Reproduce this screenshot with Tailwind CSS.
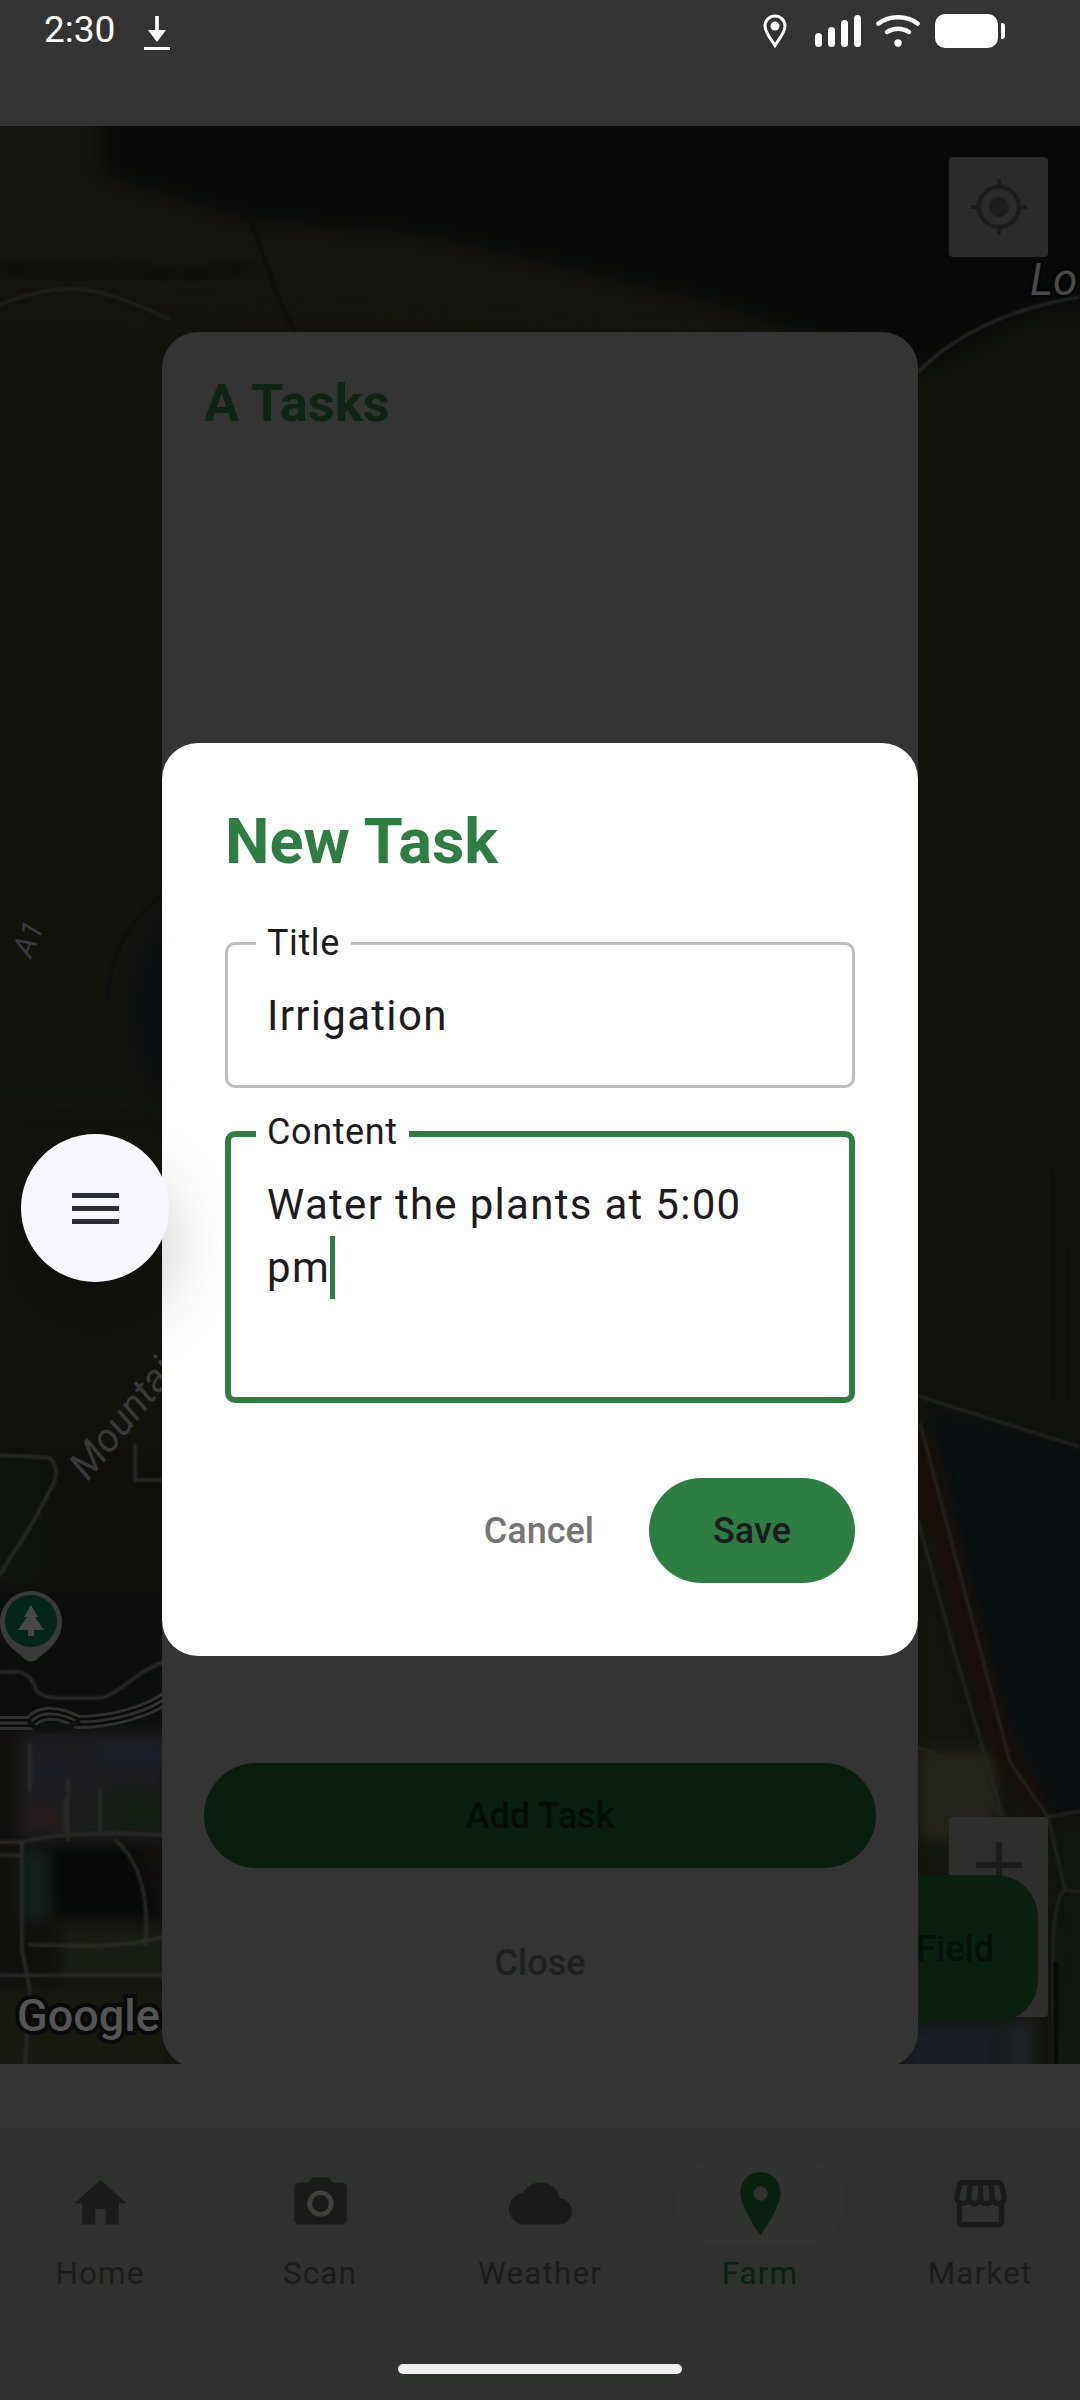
<!DOCTYPE html>
<html lang="en">
<head>
    <meta charset="UTF-8">
    <meta name="viewport" content="width=device-width, initial-scale=1.0">
    <title>Farm - New Task</title>
    <script src="https://cdn.jsdelivr.net/npm/@tailwindcss/browser@4"></script>
</head>
<body class="bg-[#333333]">
<div class="relative w-[1080px] h-[2400px] overflow-hidden bg-[#343434] font-[family-name:Roboto]">

    <!-- status bar + app header -->
    <div class="h-[126px] bg-[#333333] flex items-start justify-between pl-[44px] pr-[75px] pt-[9px] text-white">
        <div class="flex items-center gap-[29px]">
            <span class="text-[37px] leading-[42px]">2:30</span>
            <svg class="w-[26px] h-[34px] mt-[6px]" viewBox="0 0 26 34" fill="#fff">
                <path d="M11.200 0h3.600v14H22L13 26 4 14h7.200z"/>
                <rect x="0" y="31" width="26" height="3"/>
            </svg>
        </div>
        <div class="flex items-center mt-[5px]">
            <svg class="w-[24px] h-[34px]" viewBox="0 0 24 34" fill="none">
                <path d="M12 31.500C8 25 2 18.500 2 12a10 10 0 0 1 20 0c0 6.500-6 13-10 19.500z" stroke="#fff" stroke-width="3"/>
                <circle cx="12" cy="12" r="4.500" fill="#fff"/>
            </svg>
            <svg class="w-[46px] h-[34px] ml-[28px]" viewBox="0 0 46 34" fill="#fff">
                <rect x="0" y="19" width="7" height="14" rx="3.500"/>
                <rect x="13" y="13" width="7" height="20" rx="3.500"/>
                <rect x="26" y="6" width="7" height="27" rx="3.500"/>
                <rect x="39" y="1" width="7" height="32" rx="3.500"/>
            </svg>
            <svg class="w-[44px] h-[34px] ml-[15px]" viewBox="0 0 44 34" fill="none" stroke="#fff" stroke-linecap="round">
                <path d="M2.500 9.500C13 1 31 1 41.500 9.500" stroke-width="4.500"/>
                <path d="M11 18c6.500-4.500 15.500-4.500 22 0" stroke-width="4.500"/>
                <circle cx="22" cy="29" r="3.700" fill="#fff" stroke="none"/>
            </svg>
            <div class="w-[63px] h-[34px] ml-[15px] bg-white rounded-[10px]"></div>
            <div class="w-[4px] h-[16px] ml-[3px] bg-white rounded-r-[3px]"></div>
        </div>
    </div>

    <!-- map -->
    <div class="relative h-[1938px] overflow-hidden bg-[#12130c]">
        <svg class="absolute inset-0 w-[1080px] h-[1938px]" viewBox="0 126 1080 1938" fill="none">
            <defs>
                <filter id="soft" x="-20%" y="-20%" width="140%" height="140%" color-interpolation-filters="sRGB"><feGaussianBlur stdDeviation="12"/></filter>
                <filter id="mid" x="-20%" y="-20%" width="140%" height="140%" color-interpolation-filters="sRGB"><feGaussianBlur stdDeviation="7"/></filter>
                <filter id="thin" x="-20%" y="-20%" width="140%" height="140%" color-interpolation-filters="sRGB"><feGaussianBlur stdDeviation="1"/></filter>
            </defs>
            <g filter="url(#soft)">
                <rect x="-40" y="300" width="210" height="800" fill="#11140d"/>
                <polygon points="-40,100 300,100 900,350 -40,300" fill="#15130d"/>
                <polygon points="103,90 1120,90 1120,310 1040,310 918,372 800,332 700,300 430,236 250,220 103,176" fill="#070a09"/>
                <ellipse cx="200" cy="1010" rx="70" ry="110" fill="#0b0e10"/>
            </g>
            <path d="M0 265C60 278 110 266 150 275S230 270 250 264" stroke="#0c0b08" stroke-width="10" filter="url(#mid)"/>
            <path d="M235 190C260 230 270 290 295 332" stroke="#0d0c09" stroke-width="3" filter="url(#thin)"/>
            <path d="M108 1000C110 950 130 920 162 895" stroke="#0a0d10" stroke-width="3" filter="url(#thin)"/>
            <path d="M0 305C30 292 60 287 85 290C110 293 140 305 170 320" stroke="#22221d" stroke-width="3" filter="url(#thin)"/>
            <path d="M918 372C950 340 1000 310 1080 297" stroke="#272724" stroke-width="3" filter="url(#thin)"/>

            <!-- lower left: trees, lake, town -->
            <g filter="url(#mid)">
                <rect x="-20" y="1450" width="190" height="640" fill="#100f0c"/>
                <rect x="-20" y="1460" width="60" height="120" fill="#0e150e"/>
                <rect x="-20" y="1590" width="190" height="140" fill="#0c0e0b"/>
                <rect x="18" y="1730" width="150" height="110" fill="#1b1c1e"/>
                <rect x="24" y="1755" width="50" height="30" fill="#1b1d24"/>
                <rect x="100" y="1745" width="70" height="18" fill="#181f2a"/>
                <rect x="25" y="1805" width="35" height="25" fill="#261b1b"/>
                <ellipse cx="135" cy="1812" rx="40" ry="22" fill="#141e13"/>
                <path d="M40 1848H135L158 1915H55z" fill="#07090a"/>
                <rect x="20" y="1850" width="30" height="70" fill="#14201a"/>
                <rect x="60" y="1925" width="110" height="55" fill="#181d13"/>
                <rect x="-20" y="1990" width="190" height="90" fill="#181a11"/>
            </g>
            <g stroke="#2a2a28" stroke-width="3.500" stroke-linecap="round" filter="url(#thin)">
                <path d="M0 1455L50 1458Q62 1470 50 1490Q30 1530 12 1555L0 1575"/>
                <path d="M0 1672H20Q32 1675 36 1690Q42 1698 60 1698H100C120 1695 135 1670 170 1660"/>
                <path d="M165 1835C120 1832 60 1832 22 1842V1950L30 1990L25 2064"/>
                <path d="M0 1842H20M0 1855H20M30 1945C80 1945 120 1950 170 1935M0 1975H170"/>
                <path d="M115 1840C140 1860 150 1900 145 1945M135 1445V1480H170"/>
                <path d="M30 1790V1745M65 1800V1830M68 1780V1840M100 1790V1830"/>
            </g>
            <g fill="none" stroke-linecap="round">
                <path d="M0 1723H30C40 1710 60 1712 78 1722C110 1722 150 1712 170 1695" stroke="#30302e" stroke-width="14"/>
                <path d="M0 1723H30C40 1710 60 1712 78 1722C110 1722 150 1712 170 1695" stroke="#0a0a0a" stroke-width="8"/>
                <path d="M0 1723H30C40 1710 60 1712 78 1722C110 1722 150 1712 170 1695" stroke="#30302e" stroke-width="3"/>
                <path d="M30 1723C42 1738 62 1730 78 1722" stroke="#111" stroke-width="5"/>
            </g>

            <!-- lower right: water, red track, field -->
            <g filter="url(#mid)">
                <polygon points="918,1500 918,2090 1060,2090 1050,1820 1005,1780 925,1420" fill="#12150e"/>
                <polygon points="925,1405 1120,1455 1120,1815 1050,1812 1010,1762" fill="#0a0f11"/>
                <rect x="918" y="1750" width="80" height="90" fill="#23231a"/>
                <rect x="1058" y="1825" width="40" height="260" fill="#10160e"/>
                <rect x="1005" y="2020" width="30" height="60" fill="#1d2024"/>
                <rect x="905" y="2025" width="95" height="60" fill="#191d24"/>
            </g>
            <path d="M922 1440L930 1490L990 1708C1000 1745 1010 1765 1040 1808" stroke="#190f0b" stroke-width="24" filter="url(#mid)"/>
            <g stroke="#242422" stroke-width="3" filter="url(#thin)">
                <path d="M918 1396L1080 1447"/>
                <path d="M920 1423L1010 1762L1048 1817L1080 1811"/>
                <path d="M918 1520L953 1647L1003 1817"/>
                <path d="M918 1748C960 1760 980 1780 1000 1815"/>
                <path d="M1048 1817L1065 1890L1080 1892M1065 1890C1050 1900 1052 1960 1055 2064"/>
            </g>
            <path d="M1056 1962V2064" stroke="#0a0a0a" stroke-width="5"/>
            <path d="M1053 1170V1400M1068 1250V1400" stroke="#0c0d08" stroke-width="2" filter="url(#thin)"/>

            <!-- map labels -->
            <text x="0" y="0" transform="translate(31 959) rotate(-68)" font-size="30" font-style="italic" fill="#3a3b40">A1</text>
            <text x="0" y="0" transform="translate(88 1482) rotate(-51)" font-size="40" font-style="italic" fill="#383a3a">Mountain View</text>
            <text x="1030" y="295" font-size="44" font-style="italic" fill="#4a4a4a" stroke="#050505" stroke-width="5" paint-order="stroke">Lo</text>
            <text x="17" y="2031" font-size="45" font-weight="500" fill="#555555" stroke="#0a0a0a" stroke-width="8" paint-order="stroke">Google</text>

            <!-- park pin -->
            <path d="M31 1591C14 1591 0 1605 0 1622C0 1636 8 1646 19 1654L26 1660Q31 1663 36 1660L43 1654C54 1646 62 1636 62 1622C62 1605 48 1591 31 1591z" fill="#3a3a3a"/>
            <circle cx="31" cy="1621" r="26" fill="#04261a"/>
            <path d="M31 1605L38 1617H35L44 1630H34V1636H28V1630H18L27 1617H24z" fill="#484848"/>
        </svg>

        <!-- map controls -->
        <div class="absolute left-[949px] top-[31px] w-[99px] h-[100px] rounded-[4px] bg-[#2a2b2a] flex items-center justify-center">
            <svg class="w-[60px] h-[60px]" viewBox="0 0 60 60" fill="none" stroke="#1d1d1e" stroke-width="4">
                <circle cx="30" cy="30" r="20"/>
                <circle cx="30" cy="30" r="10" fill="#1d1d1e" stroke="none"/>
                <path d="M30 2v8M30 50v8M2 30h8M50 30h8"/>
            </svg>
        </div>
        <div class="absolute left-[949px] top-[1691px] w-[99px] h-[200px] rounded-[4px] bg-[#2e2f2c] flex justify-center pt-[25px]">
            <svg class="w-[46px] h-[46px]" viewBox="0 0 46 46" fill="#1d1d1e">
                <rect x="0" y="20" width="46" height="6"/>
                <rect x="20" y="0" width="6" height="46"/>
            </svg>
        </div>
        <div class="absolute left-[860px] top-[1749px] w-[178px] h-[147px] rounded-[42px] bg-[#0a1f10] flex items-center justify-end pr-[44px] whitespace-nowrap text-[36px] font-medium text-[#060f09]">Add Field</div>

        <!-- tasks panel behind the dialog -->
        <div class="absolute left-[162px] top-[206px] w-[756px] h-[1736px] rounded-[36px] bg-[#343434] flex flex-col px-[42px]">
            <div class="mt-[40px] text-[52.5px] leading-[63px] font-bold text-[#0e2414]">A Tasks</div>
            <div class="mt-auto h-[105px] rounded-full bg-[#0a1e10] flex items-center justify-center text-[36px] font-medium text-[#050d07]">Add Task</div>
            <div class="mt-[74px] mb-[84px] text-center text-[36px] leading-[42px] font-medium text-[#1f1f1f]">Close</div>
        </div>
    </div>

    <!-- gap above tab bar -->
    <div class="h-[63px] bg-[#343434]"></div>

    <!-- tab bar -->
    <div class="h-[273px] bg-[#2f312e] pt-[45px]">
        <div class="flex gap-[22px] pl-[1px]">
            <div class="w-[198px] flex flex-col items-center">
                <svg class="w-[63px] h-[63px]" viewBox="0 0 24 24" fill="#1a1a1a"><path d="M10 20v-6h4v6h5v-8h3L12 3 2 12h3v8z"/></svg>
                <span class="mt-[18px] text-[31.5px] leading-[42px] tracking-[1.1px] text-[#1b1c1a]">Home</span>
            </div>
            <div class="w-[198px] flex flex-col items-center">
                <svg class="w-[63px] h-[63px]" viewBox="0 0 24 24" fill="#1a1a1a"><path d="M9 2L7.170 4H4c-1.100 0-2 .9-2 2v12c0 1.100.9 2 2 2h16c1.100 0 2-.9 2-2V6c0-1.100-.9-2-2-2h-3.170L15 2H9z"/><circle cx="12" cy="12" r="4.100" fill="none" stroke="#40413f" stroke-width="1.800"/></svg>
                <span class="mt-[18px] text-[31.5px] leading-[42px] tracking-[1.1px] text-[#1b1c1a]">Scan</span>
            </div>
            <div class="w-[198px] flex flex-col items-center">
                <svg class="w-[63px] h-[63px]" viewBox="0 0 24 24" fill="#1a1a1a"><path d="M19.350 10.040C18.670 6.590 15.640 4 12 4 9.110 4 6.600 5.640 5.350 8.040 2.340 8.360 0 10.910 0 14c0 3.310 2.690 6 6 6h13c2.760 0 5-2.240 5-5 0-2.640-2.050-4.780-4.650-4.960z"/></svg>
                <span class="mt-[18px] text-[31.5px] leading-[42px] tracking-[1.1px] text-[#1b1c1a]">Weather</span>
            </div>
            <div class="relative w-[198px] flex flex-col items-center">
                <div class="absolute left-[15px] top-[-12px] w-[169px] h-[85px] rounded-full bg-[#303330]"></div>
                <svg class="relative w-[63px] h-[63px]" viewBox="2 1 20 22" fill="#0a2010"><path fill-rule="evenodd" d="M12 1C7.800 1 5 4.200 5 8.500 5 13.500 12 23 12 23s7-9.500 7-14.500C19 4.200 16.200 1 12 1zm0 10a2.500 2.500 0 1 1 0-5 2.500 2.500 0 0 1 0 5z"/></svg>
                <span class="mt-[18px] text-[31.5px] leading-[42px] tracking-[1.1px] text-[#0a2010]">Farm</span>
            </div>
            <div class="w-[198px] flex flex-col items-center">
                <svg class="w-[63px] h-[63px]" viewBox="0 0 24 24" fill="#1a1a1a"><path d="M21.900 8.890l-1.050-4.370c-.22-.9-1-1.520-1.910-1.520H5.050c-.9 0-1.690.63-1.900 1.520L2.100 8.890c-.24 1.020-.02 2.060.62 2.880.08.11.19.19.28.29V19c0 1.100.9 2 2 2h14c1.100 0 2-.9 2-2v-6.940c.09-.09.2-.18.28-.28.64-.82.87-1.870.62-2.890zm-2.990-3.900l1.050 4.370c.1.42.01.84-.25 1.170-.14.18-.44.47-.94.47-.61 0-1.140-.49-1.210-1.140L16.980 5l1.930-.01zM13 5h1.960l.54 4.520c.05.39-.07.78-.33 1.070-.22.26-.54.41-.95.41-.67 0-1.220-.59-1.220-1.310V5zM8.490 9.520L9.040 5H11v4.690c0 .72-.55 1.310-1.290 1.310-.34 0-.65-.15-.89-.41-.25-.29-.37-.68-.33-1.070zm-4.450-.16L5.050 5h1.970l-.58 4.860c-.08.65-.6 1.140-1.210 1.140-.49 0-.8-.29-.93-.47-.27-.32-.36-.75-.26-1.170zM5 19v-6.030c.08.01.15.03.23.03.87 0 1.660-.36 2.240-.95.6.6 1.400.95 2.310.95.87 0 1.650-.36 2.230-.93.59.57 1.390.93 2.290.93.84 0 1.640-.35 2.240-.95.58.59 1.370.95 2.240.95.08 0 .15-.02.23-.03V19H5z"/></svg>
                <span class="mt-[18px] text-[31.5px] leading-[42px] tracking-[1.1px] text-[#1b1c1a]">Market</span>
            </div>
        </div>
        <div class="mt-[69px] mx-auto w-[284px] h-[10px] rounded-full bg-[#eeeeee]"></div>
    </div>

    <!-- new task dialog -->
    <div class="absolute left-[162px] top-[743px] w-[756px] h-[913px] rounded-[36px] bg-white px-[64px] pt-[67px]">
        <div class="-ml-[1px] text-[63px] leading-[63px] font-bold text-[#2e7d42]">New Task</div>

        <div class="relative mt-[69px] h-[146px] w-[630px] -ml-[1px] rounded-[10px] border-[3px] border-[#bdbdbd] flex items-center pl-[39px] text-[42px] leading-[63px] tracking-[1.3px] text-[#1c1b1f]">
            Irrigation
            <span class="absolute left-[28px] top-[-16px] bg-white px-[11px] text-[36px] leading-[28px] text-[#1c1b1f] tracking-[0.6px]">Title</span>
        </div>

        <div class="relative mt-[43px] h-[272px] w-[630px] -ml-[1px] rounded-[10px] border-[6px] border-[#2e7d42] pl-[36px] pt-[36px] text-[42px] leading-[63px] tracking-[1.3px] text-[#1c1b1f]">
            Water the plants at 5:00<br>pm<span class="inline-block align-top w-[5px] h-[63px] bg-[#2e7d42]"></span>
            <span class="absolute left-[25px] top-[-19px] bg-white px-[11px] text-[36px] leading-[28px] text-[#1c1b1f] tracking-[0.6px]">Content</span>
        </div>

        <div class="mt-[75px] flex items-center justify-end -mr-[1px]">
            <span class="mr-[55px] text-[36px] font-medium text-[#757575]">Cancel</span>
            <div class="w-[206px] h-[105px] rounded-full bg-[#2e7d42] flex items-center justify-center text-[36px] font-medium text-[#1c1b1f]">Save</div>
        </div>
    </div>

    <!-- floating menu button -->
    <div class="absolute left-[21px] top-[1134px] w-[148px] h-[148px] rounded-full bg-[#f8f6fe] shadow-[0_36px_70px_rgba(0,0,0,0.22)] flex flex-col items-center justify-center gap-[8px]">
        <div class="w-[47px] h-[5px] bg-[#2d2f36]"></div>
        <div class="w-[47px] h-[5px] bg-[#2d2f36]"></div>
        <div class="w-[47px] h-[5px] bg-[#2d2f36]"></div>
    </div>
</div>
</body>
</html>
